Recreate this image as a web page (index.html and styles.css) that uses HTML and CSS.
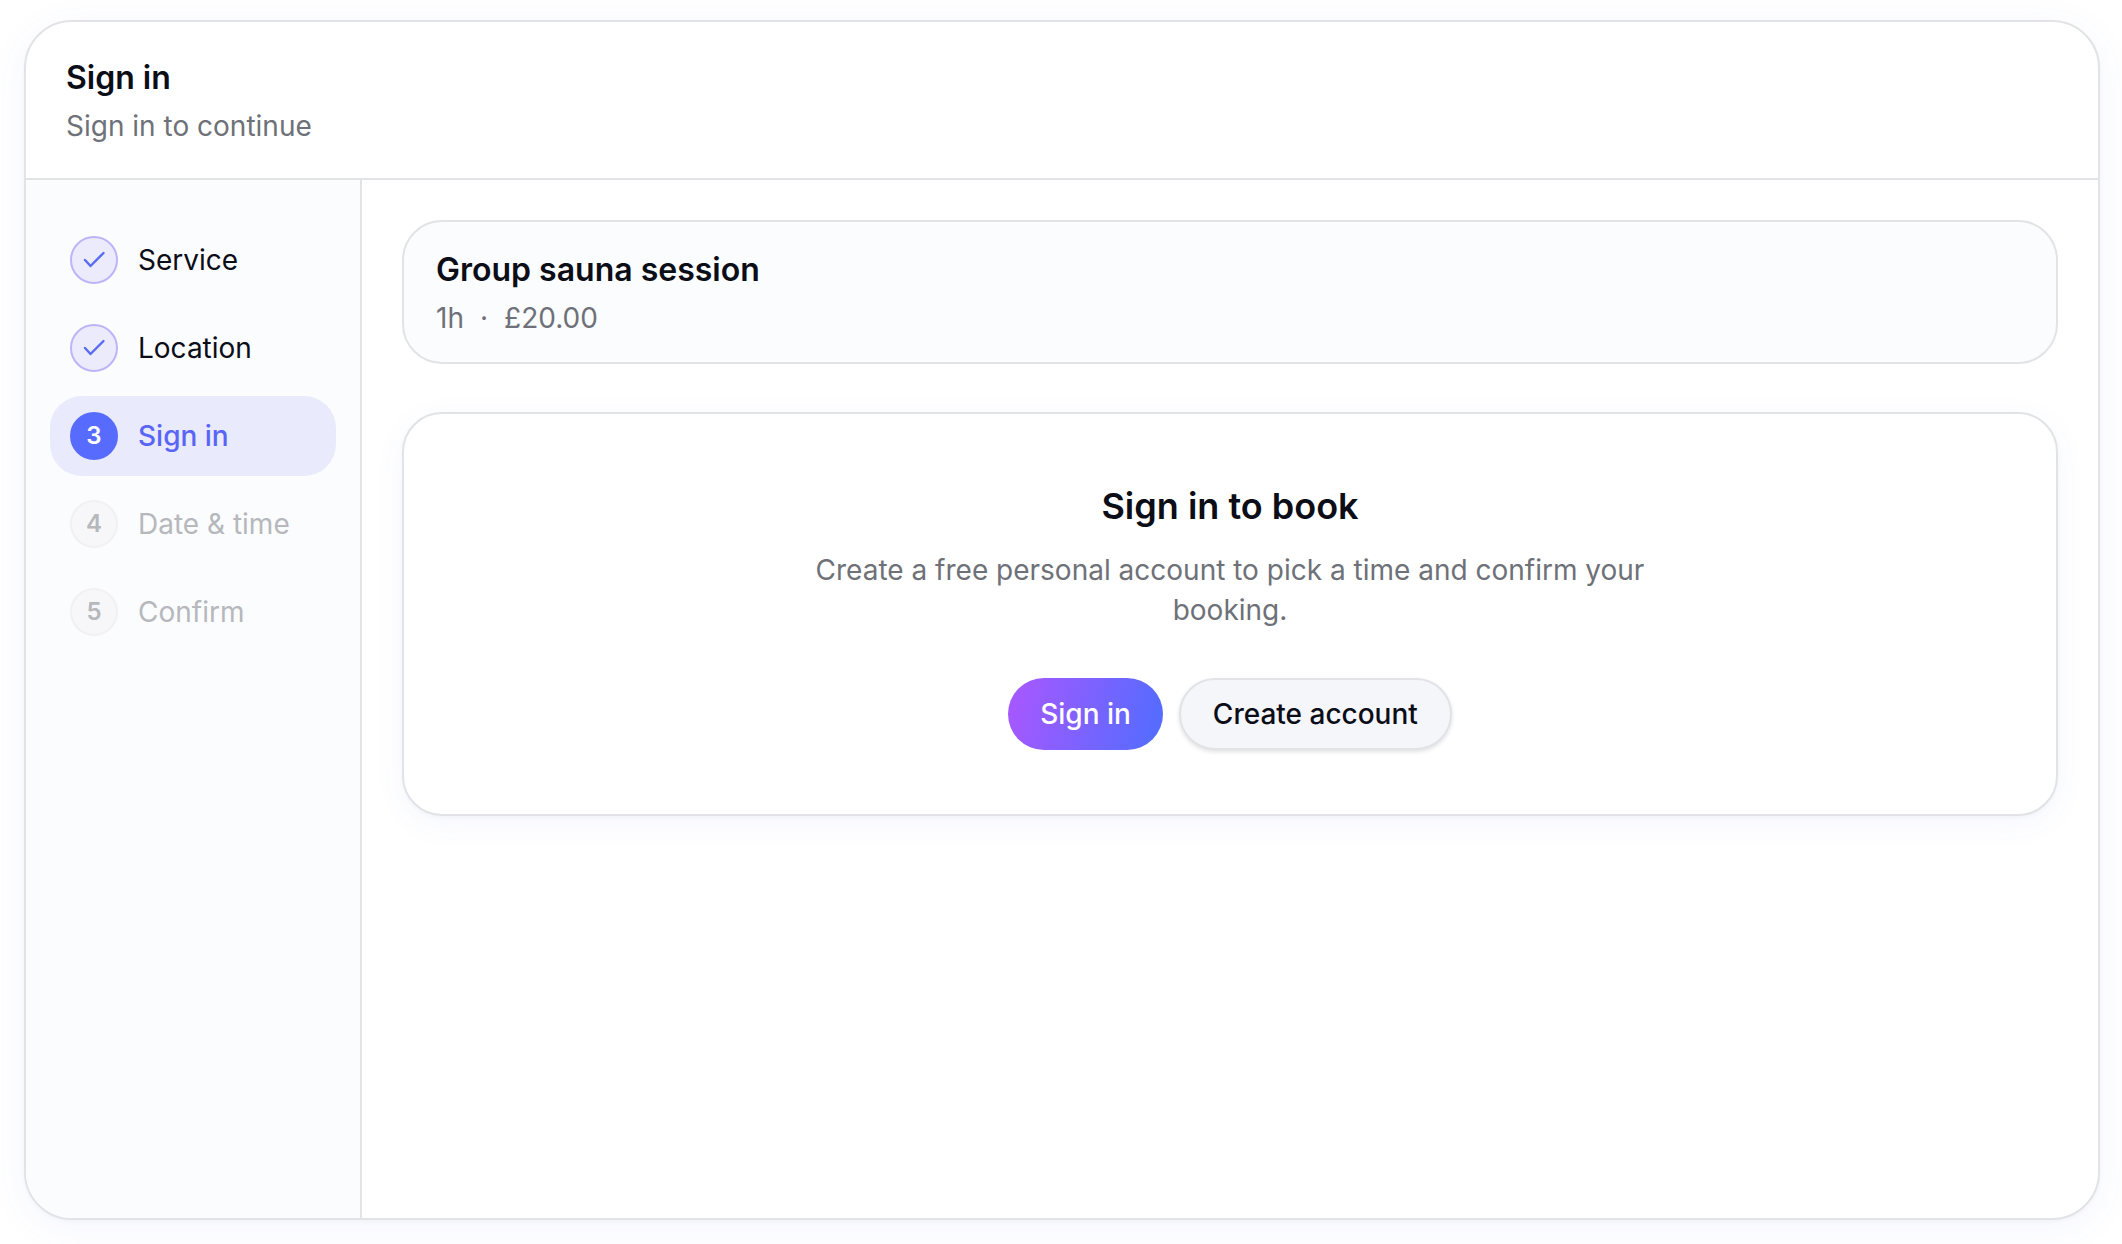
FILE: index.html
```html
<!DOCTYPE html>
<html lang="en">
<head>
    <meta charset="UTF-8" />
    <meta name="viewport" content="width=device-width, initial-scale=1.0"/>
    <title>Sign in</title>
    <link rel="stylesheet" href="styles.css">
</head>
<body>
    <div class="booking">
        <header class="booking-header">
            <h1 class="title">Sign in</h1>
            <p class="subtitle">Sign in to continue</p>
        </header>

        <div class="booking-body">
            <nav class="sidebar" aria-label="Booking steps">
                <ol class="steps">
                    <li>
                        <button type="button" class="step done">
                            <span class="step-badge">
                                <svg class="check" viewBox="0 0 28 28" aria-hidden="true"><path d="M5 14 L10.5 20 L23.5 7"/></svg>
                            </span>
                            Service
                        </button>
                    </li>
                    <li>
                        <button type="button" class="step done">
                            <span class="step-badge">
                                <svg class="check" viewBox="0 0 28 28" aria-hidden="true"><path d="M5 14 L10.5 20 L23.5 7"/></svg>
                            </span>
                            Location
                        </button>
                    </li>
                    <li>
                        <button type="button" class="step active" aria-current="step">
                            <span class="step-badge">3</span>
                            Sign in
                        </button>
                    </li>
                    <li>
                        <button type="button" class="step" disabled>
                            <span class="step-badge">4</span>
                            Date &amp; time
                        </button>
                    </li>
                    <li>
                        <button type="button" class="step" disabled>
                            <span class="step-badge">5</span>
                            Confirm
                        </button>
                    </li>
                </ol>
            </nav>

            <main class="content">
                <section class="summary">
                    <h2 class="title">Group sauna session</h2>
                    <p class="subtitle summary-meta"><span>1h</span><span>·</span><span>£20.00</span></p>
                </section>

                <section class="signin">
                    <h2 class="signin-title">Sign in to book</h2>
                    <p class="signin-text">Create a free personal account to pick a time and confirm your booking.</p>
                    <div class="actions">
                        <button type="button" class="btn btn-primary">Sign in</button>
                        <button type="button" class="btn btn-secondary">Create account</button>
                    </div>
                </section>
            </main>
        </div>
    </div>
</body>
</html>
```
FILE: styles.css
```css
* {
    box-sizing: border-box;
}
body {
    margin: 0;
    min-height: 100vh;
    padding: 20px 22px 24px 24px;
    display: flex;
    font-family: Inter, sans-serif;
    font-size: 28px;
    line-height: 40px;
    color: #0b0d17;
    background: #fff;
}
h1, h2, p, ol {
    margin: 0;
    padding: 0;
}
button {
    font: inherit;
    color: inherit;
    cursor: pointer;
}
button:disabled {
    cursor: default;
}
.booking {
    flex: 1;
    display: flex;
    flex-direction: column;
    border: 2px solid #e1e3e7;
    border-radius: 48px;
    overflow: hidden;
    background: #fff;
    box-shadow: 0 2px 4px rgba(15, 20, 60, 0.03), 0 8px 40px rgba(88, 101, 255, 0.06);
}
.booking-header {
    padding: 32px 40px;
    border-bottom: 2px solid #e1e3e7;
}
.title {
    margin-bottom: 4px;
    font-size: 32px;
    line-height: 48px;
    font-weight: 600;
}
.subtitle {
    color: #6e7178;
}
.booking-body {
    flex: 1;
    display: flex;
}
.sidebar {
    flex: none;
    width: 336px;
    padding: 40px 24px;
    border-right: 2px solid #e1e3e7;
    background: #fbfcfe;
}
.steps {
    display: flex;
    flex-direction: column;
    gap: 8px;
    list-style: none;
}
.step {
    display: flex;
    align-items: center;
    gap: 20px;
    width: 100%;
    padding: 16px 20px;
    border: none;
    border-radius: 32px;
    background: none;
    text-align: left;
}
.step-badge {
    display: flex;
    align-items: center;
    justify-content: center;
    width: 48px;
    height: 48px;
    border: 2px solid #f1f1f3;
    border-radius: 50%;
    background: #f7f7f9;
    font-size: 24px;
    font-weight: 600;
}
.step:disabled {
    color: #b6b8bc;
}
.done .step-badge {
    border-color: #bcb5f7;
    background: #ebebfc;
}
.active {
    color: #5865f6;
    background: #e9eafc;
    font-weight: 500;
}
.active .step-badge {
    border-color: #586bff;
    background: #586bff;
    color: #fff;
}
.check {
    width: 28px;
    height: 28px;
    fill: none;
    stroke: #586bf5;
    stroke-width: 2.4;
    stroke-linecap: round;
    stroke-linejoin: round;
}
.content {
    flex: 1;
    display: flex;
    flex-direction: column;
    gap: 48px;
    padding: 40px;
}
.summary {
    padding: 24px 32px;
    border: 2px solid #e1e3e7;
    border-radius: 40px;
    background: #fbfcfe;
}
.summary-meta {
    display: flex;
    gap: 16px;
}
.signin {
    padding: 64px;
    border: 2px solid #e1e3e7;
    border-radius: 40px;
    background: #fff;
    box-shadow: 0 2px 4px rgba(15, 20, 60, 0.03), 0 8px 32px rgba(88, 101, 255, 0.05);
    text-align: center;
}
.signin-title {
    font-size: 36px;
    line-height: 56px;
    font-weight: 600;
}
.signin-text {
    max-width: 896px;
    margin: 16px auto 48px;
    color: #6e7178;
}
.actions {
    display: flex;
    justify-content: center;
    gap: 16px;
}
.btn {
    height: 72px;
    padding: 0 32px;
    border: none;
    border-radius: 36px;
    font-weight: 500;
}
.btn-primary {
    background: linear-gradient(105deg, #a259ff 10%, #586bff 90%);
    color: #fff;
}
.btn-secondary {
    border: 2px solid #e1e3e7;
    background: #f4f6fa;
    box-shadow: 0 2px 4px rgba(0, 0, 0, 0.12);
}
```
